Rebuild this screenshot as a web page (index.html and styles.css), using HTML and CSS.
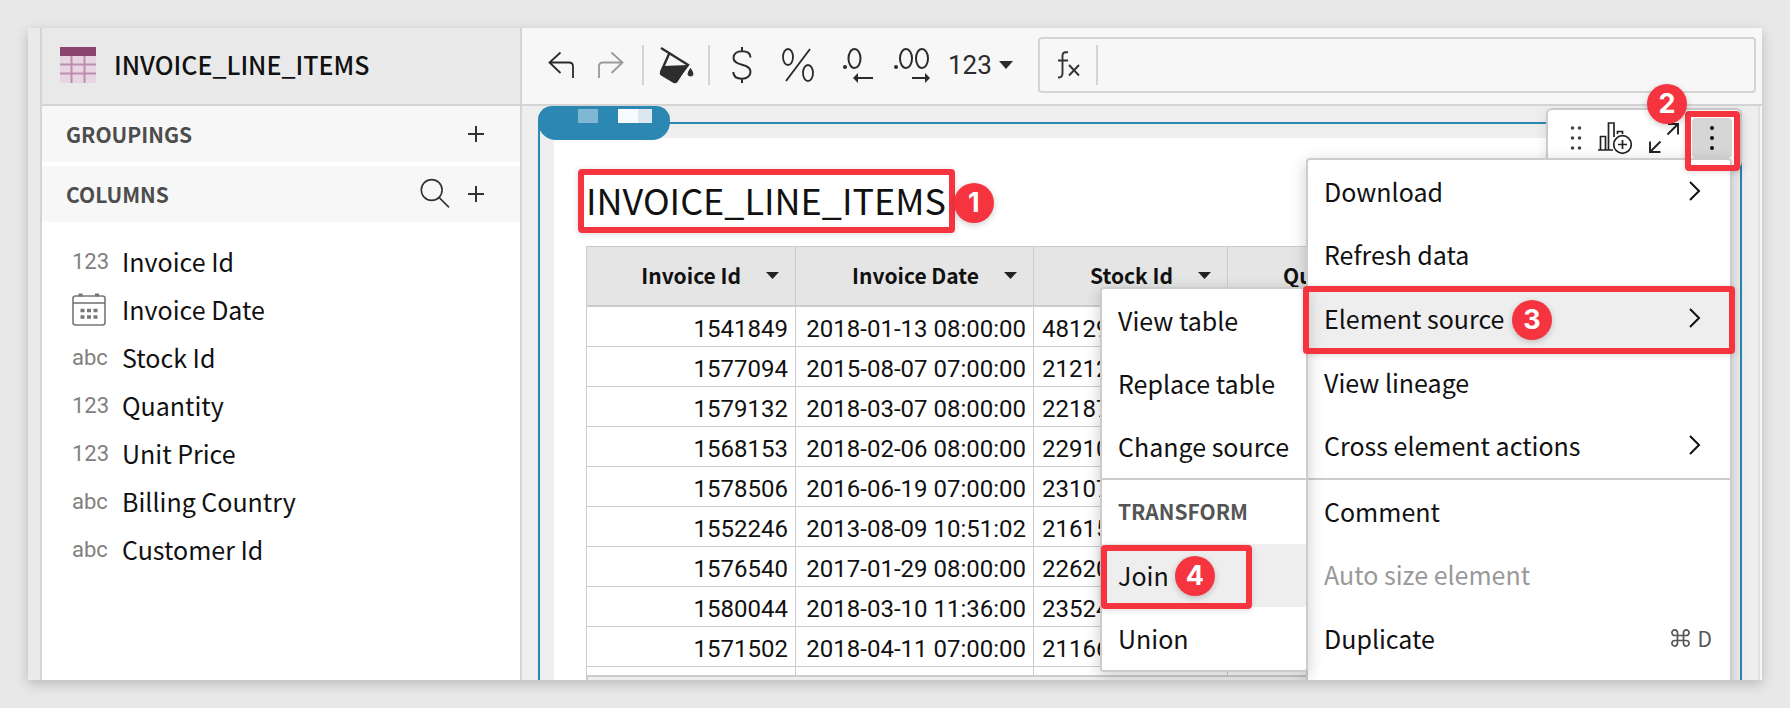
FILE: index.html
```html
<!DOCTYPE html>
<html lang="en">
<head>
<meta charset="utf-8">
<title>INVOICE_LINE_ITEMS</title>
<link rel="stylesheet" href="styles.css">
</head>
<body>
<div class="window">
  <div class="rail"></div>
  <aside class="sidebar">
    <header class="source">
      <svg class="source-icon" width="36" height="36" viewBox="0 0 36 36"><rect width="36" height="36" fill="#e7d6e1"/><path d="M0 17.5h36M0 26.5h36M11.5 9v27M24.5 9v27" stroke="#bb8dae" stroke-width="2"/><rect width="36" height="9" fill="#8a456e"/></svg>
      <h2 class="source-name">INVOICE_LINE_ITEMS</h2>
    </header>
    <section class="section-bar">
      <h3 class="section-name">GROUPINGS</h3>
      <button class="icon-button" aria-label="Add grouping"><svg width="16" height="16" viewBox="0 0 16 16"><path d="M8 0v16M0 8h16" stroke="#333" stroke-width="2"/></svg></button>
    </section>
    <section class="section-bar">
      <h3 class="section-name">COLUMNS</h3>
      <button class="icon-button" aria-label="Search columns"><svg class="search-icon" width="30" height="30" viewBox="0 0 30 30" fill="none" stroke="#333" stroke-width="1.6"><circle cx="11.7" cy="11" r="10.4"/><path d="M19 18.400l10 10"/></svg></button>
      <button class="icon-button" aria-label="Add column"><svg width="16" height="16" viewBox="0 0 16 16"><path d="M8 0v16M0 8h16" stroke="#333" stroke-width="2"/></svg></button>
    </section>
    <ul class="columns">
      <li class="column"><span class="type">123</span>Invoice Id</li>
      <li class="column"><span class="type"><svg class="calendar" width="34" height="34" viewBox="0 0 34 34" fill="none" stroke="#777" stroke-width="1.6"><rect x="1" y="3" width="32" height="29" rx="2.500"/><path d="M1 10h32"/><path d="M6.500 2h4M23 2h4" stroke-width="3"/><path d="M8.500 17.500h4M15 17.500h4M21.500 17.500h4M8.500 24h4M15 24h4M21.500 24h4" stroke-width="3.500"/></svg></span>Invoice Date</li>
      <li class="column"><span class="type">abc</span>Stock Id</li>
      <li class="column"><span class="type">123</span>Quantity</li>
      <li class="column"><span class="type">123</span>Unit Price</li>
      <li class="column"><span class="type">abc</span>Billing Country</li>
      <li class="column"><span class="type">abc</span>Customer Id</li>
    </ul>
  </aside>
  <main class="main">
    <div class="toolbar">
      <div class="history">
        <button class="tool" aria-label="Undo"><svg width="26" height="28" viewBox="0 0 26 28" fill="none" stroke="#2b2b2b" stroke-width="1.800"><path d="M12.500 1.500L1.500 11.500l11 10.500M1.500 11.500H21q4 0 4 4V27"/></svg></button>
        <button class="tool" aria-label="Redo"><svg width="26" height="28" viewBox="0 0 26 28" fill="none" stroke="#999" stroke-width="1.800"><path d="M13.500 1.500l11 10-11 10.500M24.500 11.500H5q-4 0-4 4V27"/></svg></button>
      </div>
      <span class="rule"></span>
      <button class="tool" aria-label="Fill color"><svg width="36" height="38" viewBox="0 0 36 38"><path d="M3 2l28 17.500M11 8L3 26M29.500 19.500l-12 16" fill="none" stroke="#2d2d2d" stroke-width="2.400"/><path d="M5 20l25-1-10.500 17q-1.500 2-4 1L3 29.500q-2-1.500-1-3.500z" fill="#2d2d2d"/><path d="M32.500 22.500q5 7.500 0 7.500t0-7.500z" fill="#2d2d2d" stroke="#2d2d2d"/></svg></button>
      <span class="rule"></span>
      <div class="formats">
        <button class="tool tool-dollar" aria-label="Currency"><svg width="20" height="38" viewBox="0 0 20 38" fill="none" stroke="#2b2b2b" stroke-width="2"><path d="M10 1v4.500M10 32.500V37M18.500 11.500C18.500 7.500 15 5.300 10 5.300S1.500 8 1.500 12s3.500 5.500 8.500 6.700 8.500 3 8.500 7-3.500 7-8.500 7-8.700-2.200-8.700-6.700"/></svg></button>
        <button class="tool tool-percent" aria-label="Percent"><svg width="32" height="34" viewBox="0 0 32 34" fill="none" stroke="#2b2b2b" stroke-width="1.800"><ellipse cx="6" cy="9" rx="5" ry="8"/><ellipse cx="26" cy="25" rx="5" ry="8"/><path d="M28 1L4 33"/></svg></button>
        <button class="tool tool-decimal" aria-label="Decrease decimals"><svg width="30" height="36" viewBox="0 0 30 36" fill="none" stroke="#2b2b2b" stroke-width="2"><circle cx="2" cy="20" r="2" fill="#2b2b2b" stroke="none"/><ellipse cx="11.500" cy="11.500" rx="6" ry="9.500"/><path d="M13 31h17"/><path d="M10 31l5-5v10z" fill="#2b2b2b" stroke="none"/></svg></button>
        <button class="tool" aria-label="Increase decimals"><svg width="36" height="36" viewBox="0 0 36 36" fill="none" stroke="#2b2b2b" stroke-width="2"><circle cx="2" cy="20" r="2" fill="#2b2b2b" stroke="none"/><ellipse cx="12" cy="11.500" rx="6" ry="9.500"/><ellipse cx="28" cy="11.500" rx="6" ry="9.500"/><path d="M18 31h16"/><path d="M36 31l-5-5v10z" fill="#2b2b2b" stroke="none"/></svg></button>
        <button class="tool number-format">123<svg width="14" height="8" viewBox="0 0 14 8"><path d="M0 0h14L7 8z" fill="#2b2b2b"/></svg></button>
      </div>
      <div class="formula">
        <svg width="24" height="28" viewBox="0 0 24 28" fill="none" stroke="#333" stroke-width="1.900"><path d="M12 1.200H9.500Q6.500 1.200 6.500 5v17q0 4.500-3.500 4.500H2M2 9.500h10M13 14l10 10.500M23 14L13 24.500"/></svg>
        <span class="rule"></span>
        <input class="formula-input" type="text" aria-label="Formula">
      </div>
    </div>
    <div class="canvas">
      <div class="frame">
        <span class="tab"><i class="chip chip-dim"></i><i class="chip chip-white"></i><i class="chip chip-pale"></i></span>
        <article class="card">
          <h1 class="title"><span class="title-text">INVOICE_LINE_ITEMS<span class="mark mark-title"></span><span class="badge badge-title">1</span></span></h1>
          <div class="grid">
            <table class="data">
              <colgroup><col class="col-id"><col class="col-date"><col class="col-stock"><col></colgroup>
              <thead>
                <tr>
                  <th><span class="head">Invoice Id<svg width="13" height="7" viewBox="0 0 13 7"><path d="M0 0h13L6.500 7z"/></svg></span></th>
                  <th><span class="head">Invoice Date<svg width="13" height="7" viewBox="0 0 13 7"><path d="M0 0h13L6.500 7z"/></svg></span></th>
                  <th><span class="head">Stock Id<svg width="13" height="7" viewBox="0 0 13 7"><path d="M0 0h13L6.500 7z"/></svg></span></th>
                  <th class="quantity">Quantity</th>
                </tr>
              </thead>
              <tbody>
                <tr><td>1541849</td><td>2018-01-13 08:00:00</td><td class="stock">48129</td><td></td></tr>
                <tr><td>1577094</td><td>2015-08-07 07:00:00</td><td class="stock">21212</td><td></td></tr>
                <tr><td>1579132</td><td>2018-03-07 08:00:00</td><td class="stock">22187</td><td></td></tr>
                <tr><td>1568153</td><td>2018-02-06 08:00:00</td><td class="stock">22910</td><td></td></tr>
                <tr><td>1578506</td><td>2016-06-19 07:00:00</td><td class="stock">23107</td><td></td></tr>
                <tr><td>1552246</td><td>2013-08-09 10:51:02</td><td class="stock">21615</td><td></td></tr>
                <tr><td>1576540</td><td>2017-01-29 08:00:00</td><td class="stock">22620</td><td></td></tr>
                <tr><td>1580044</td><td>2018-03-10 11:36:00</td><td class="stock">23524</td><td></td></tr>
                <tr><td>1571502</td><td>2018-04-11 07:00:00</td><td class="stock">21166</td><td></td></tr>
                <tr><td></td><td></td><td></td><td></td></tr>
              </tbody>
            </table>
          </div>
          <div class="grid-footer"></div>
        </article>
        <div class="element-tools">
          <button class="tool" aria-label="Move"><svg width="10" height="24" viewBox="0 0 10 24" fill="#444"><circle cx="1.500" cy="2" r="1.800"/><circle cx="8.500" cy="2" r="1.800"/><circle cx="1.500" cy="12" r="1.800"/><circle cx="8.500" cy="12" r="1.800"/><circle cx="1.500" cy="22" r="1.800"/><circle cx="8.500" cy="22" r="1.800"/></svg></button>
          <button class="tool" aria-label="Create child element"><svg width="34" height="32" viewBox="0 0 34 32" fill="none" stroke="#222" stroke-width="1.700"><path d="M0 28h15M2.500 28V14.500h5V28M10.500 28V1h5.500v14M19.500 12V9.500h5V12"/><circle cx="24.500" cy="22.500" r="8.800"/><path d="M24.500 18v9M20 22.500h9"/></svg></button>
          <button class="tool" aria-label="Maximize"><svg width="30" height="30" viewBox="0 0 30 30" fill="none" stroke="#222" stroke-width="1.900"><path d="M18.500 11.500L29 1M19 1h10v10.500M11.500 18.500L1 29M1 18.500V29h10.500"/></svg></button>
          <button class="tool more" aria-label="More"><svg width="4" height="24" viewBox="0 0 4 24" fill="#111"><circle cx="2" cy="2" r="2"/><circle cx="2" cy="12" r="2"/><circle cx="2" cy="22" r="2"/></svg></button>
          <div class="menu">
            <div class="menu-group menu-group-main">
              <button class="item">Download<svg class="chevron" width="12" height="20" viewBox="0 0 12 20"><path d="M1 1l9 9-9 9"/></svg></button>
              <button class="item">Refresh data</button>
              <div class="item-wrap">
                <button class="item item-active">Element source<svg class="chevron" width="12" height="20" viewBox="0 0 12 20"><path d="M1 1l9 9-9 9"/></svg></button>
                <div class="submenu">
                  <button class="item">View table</button>
                  <button class="item">Replace table</button>
                  <button class="item">Change source</button>
                  <div class="submenu-label">TRANSFORM</div>
                  <div class="item-wrap">
                    <button class="item item-active">Join</button>
                    <span class="mark mark-join"></span><span class="badge badge-join">4</span>
                  </div>
                  <button class="item">Union</button>
                </div>
                <span class="mark mark-source"></span><span class="badge badge-source">3</span>
              </div>
              <button class="item">View lineage</button>
              <button class="item">Cross element actions<svg class="chevron" width="12" height="20" viewBox="0 0 12 20"><path d="M1 1l9 9-9 9"/></svg></button>
            </div>
            <div class="menu-group menu-group-more">
              <button class="item">Comment</button>
              <button class="item" disabled>Auto size element</button>
              <button class="item">Duplicate<span class="shortcut"><svg width="19" height="18" viewBox="0 0 19 18" fill="none" stroke="#555" stroke-width="1.700"><path d="M6.500 6.500h6v5h-6zM6.500 6.500H4A2.800 2.800 0 1 1 6.500 4zM12.500 6.500V4A2.800 2.800 0 1 1 15 6.500zM12.500 11.500H15A2.800 2.800 0 1 1 12.500 14zM6.500 11.500V14A2.800 2.800 0 1 1 4 11.500z"/></svg>D</span></button>
            </div>
          </div>
          <span class="mark mark-more"></span><span class="badge badge-more">2</span>
        </div>
      </div>
    </div>
  </main>
</div>
</body>
</html>
```
FILE: styles.css
```css
* { box-sizing: border-box; }

body {
  margin: 0;
  height: 100vh;
  padding: 28px;
  overflow: hidden;
  background: #e8e8e8;
  color: #111;
  font: 25px "Noto Sans CJK SC", "Noto Sans", sans-serif;
}

h1, h2, h3, ul { margin: 0; padding: 0; }

button {
  margin: 0;
  padding: 0;
  border: 0;
  background: none;
  color: inherit;
  font: inherit;
}

svg { display: block; flex: none; overflow: visible; }

.window {
  display: flex;
  height: 100%;
  overflow: hidden;
  background: #f7f7f7;
  box-shadow: 0 4px 12px rgba(0, 0, 0, 0.2);
}

.rail {
  width: 14px;
  flex: none;
  background: #eaeaea;
  border-right: 2px solid #d4d4d4;
}

/* Sidebar */
.sidebar {
  width: 480px;
  flex: none;
  background: #fff;
  border-right: 2px solid #d4d4d4;
}

.source {
  display: flex;
  align-items: center;
  gap: 18px;
  height: 78px;
  padding: 0 18px 2px;
  background: #e9e9e9;
  border-bottom: 2px solid #d4d4d4;
}

.source-name { padding-bottom: 2px; font-size: 25px; font-weight: 500; line-height: 36px; }

.section-bar {
  display: flex;
  align-items: center;
  gap: 18px;
  height: 56px;
  margin-bottom: 4px;
  padding: 0 36px 0 24px;
  background: #f7f7f7;
}

.section-name {
  flex: 1;
  color: #4d4d4d;
  font-size: 21px;
  font-weight: 600;
  line-height: 32px;
}

.columns { padding-top: 12px; list-style: none; }

.column {
  display: flex;
  align-items: center;
  height: 48px;
  padding: 0 0 2px 30px;
}

.type {
  width: 50px;
  padding-top: 2px;
  color: #808080;
  font: 22px/32px Roboto, sans-serif;
}

/* Toolbar */
.main {
  display: flex;
  flex: 1;
  flex-direction: column;
  min-width: 0;
}

.toolbar {
  display: flex;
  align-items: center;
  height: 78px;
  flex: none;
  padding: 0 6px 2px 26px;
  background: #f7f7f7;
  border-bottom: 2px solid #d4d4d4;
}

.tool { display: flex; align-items: center; justify-content: center; }

.history { display: flex; gap: 24px; margin-right: 18px; }

.rule { width: 2px; height: 40px; flex: none; background: #d4d4d4; }

.toolbar > .tool { margin: 0 14px; }

.formats { display: flex; align-items: center; gap: 18px; margin: 0 25px 0 18px; }
.tool-dollar { width: 28px; }
.tool-percent { width: 48px; }
.tool-decimal { width: 36px; }
.number-format { gap: 7px; color: #2b2b2b; font: 26px/32px Roboto, sans-serif; }

.formula {
  display: flex;
  flex: 1;
  align-items: center;
  gap: 16px;
  height: 56px;
  padding-left: 16px;
  border: 2px solid #d4d4d4;
  border-radius: 4px;
}

.formula-input {
  flex: 1;
  height: 40px;
  border: 0;
  background: none;
  font: inherit;
}

/* Canvas */
.canvas {
  display: flex;
  flex: 1;
  min-height: 0;
  margin-right: 2px;
  padding: 16px 16px 0;
  background: #eee;
  border-right: 2px solid #e0e0e0;
}

.frame {
  position: relative;
  display: flex;
  flex: 1;
  min-width: 0;
  padding: 14px 14px 0;
  border: 2px solid #2c87b3;
  border-bottom: 0;
}

.tab {
  position: absolute;
  top: -18px;
  left: -2px;
  display: flex;
  width: 132px;
  height: 34px;
  padding: 3px 0 0 40px;
  background: #2c87b3;
  border-radius: 14px 14px 18px 18px;
}

.chip { width: 20px; height: 14px; }
.chip-dim { margin-right: 20px; background: #80b7d2; }
.chip-white { background: #f8fbfd; }
.chip-pale { width: 14px; background: #dbe8f1; }

.card {
  display: flex;
  flex: 1;
  flex-direction: column;
  min-width: 0;
  padding: 0 10px 0 32px;
  background: #fff;
  border-radius: 4px 4px 0 0;
}

.title {
  height: 108px;
  flex: none;
  padding-top: 29px;
  font-size: 36px;
  font-weight: 400;
  line-height: 64px;
}

.title-text { position: relative; }

.grid {
  flex: 1;
  min-height: 0;
  overflow: hidden;
  border: 1px solid #ccc;
  border-bottom: 0;
}

.grid-footer {
  height: 5px;
  flex: none;
  background: #eee;
  border: 2px solid #ccc;
  border-bottom: 0;
}

.data { width: 100%; table-layout: fixed; border-collapse: separate; border-spacing: 0; }
.col-id { width: 209px; }
.col-date { width: 238px; }
.col-stock { width: 194px; }

.data th {
  height: 60px;
  padding: 0 16px 2px 0;
  background: #e5e5e5;
  border-right: 1px solid #ccc;
  border-bottom: 2px solid #ccc;
  font-size: 21px;
  font-weight: 600;
}

.data th.quantity { padding-left: 55px; text-align: left; }

.head { display: flex; align-items: center; justify-content: flex-end; gap: 25px; fill: #222; }

.data td {
  height: 40px;
  padding: 5px 7px 0 8px;
  border-right: 1px solid #ccc;
  border-bottom: 1px solid #ccc;
  font: 24px/32px Roboto, sans-serif;
  text-align: right;
  white-space: nowrap;
}

.data .stock { text-align: left; }

/* Floating element tools and menus */
.element-tools {
  position: absolute;
  top: -16px;
  right: -2px;
  display: flex;
  align-items: center;
  width: 196px;
  height: 60px;
  padding: 0 8px 0 23px;
  background: #fff;
  border: 2px solid #ccc;
  border-radius: 6px;
  box-shadow: 0 4px 12px rgba(0, 0, 0, 0.1);
  gap: 17px;
}

.element-tools > .more {
  width: 40px;
  height: 40px;
  margin-left: -4px;
  background: #d6d6d6;
  border-radius: 4px;
}

.menu {
  position: absolute;
  top: 48px;
  right: 8px;
  width: 426px;
  height: 560px;
  background: #fff;
  border: 2px solid #ccc;
  border-radius: 4px;
  box-shadow: 0 4px 16px rgba(0, 0, 0, 0.2);
}

.menu-group { display: grid; grid-auto-rows: 1fr; }
.menu-group-main { height: 320px; border-bottom: 2px solid #ccc; }
.menu-group-more { height: 191px; }

.item {
  display: flex;
  align-items: center;
  justify-content: space-between;
  width: 100%;
  min-height: 63px;
  padding: 0 29px 2px 16px;
  text-align: left;
  white-space: nowrap;
}

.item:disabled { color: #999; }
.item-active { background: #eee; }
.item-wrap { position: relative; display: flex; }

.chevron { fill: none; stroke: #111; stroke-width: 2; }

.shortcut {
  display: flex;
  align-items: center;
  gap: 8px;
  margin-right: -11px;
  color: #555;
  font-size: 21px;
}

.submenu {
  position: absolute;
  top: 0;
  right: 100%;
  width: 208px;
  background: #fff;
  border: 2px solid #ccc;
  border-radius: 4px;
  box-shadow: 0 4px 16px rgba(0, 0, 0, 0.2);
}

.submenu-label {
  height: 66px;
  padding: 14px 16px 0;
  border-top: 2px solid #ccc;
  color: #555;
  font-size: 21px;
  font-weight: 600;
  line-height: 34px;
}

/* Step annotations */
.mark {
  position: absolute;
  border: 6px solid #f63440;
  border-radius: 4px;
  box-shadow: 0 1px 6px rgba(0, 0, 0, 0.15);
}

.badge {
  position: absolute;
  display: flex;
  align-items: center;
  justify-content: center;
  width: 40px;
  height: 40px;
  background: #f63440;
  border-radius: 50%;
  box-shadow: 0 2px 6px rgba(0, 0, 0, 0.2);
  color: #fff;
  font: 700 27px/40px Inter, sans-serif;
}

.mark-title { inset: -4px -9px -8px -8px; }
.badge-title { top: 10px; right: -48px; }
.mark-more { top: 1px; right: 0; width: 55px; height: 60px; }
.badge-more { top: -26px; left: 99px; }
.mark-source { top: -1px; right: -5px; width: 432px; height: 68px; }
.badge-source { top: 13px; left: 204px; }
.mark-join { top: 1px; left: -1px; width: 151px; height: 64px; }
.badge-join { top: 12px; left: 73px; }
```
